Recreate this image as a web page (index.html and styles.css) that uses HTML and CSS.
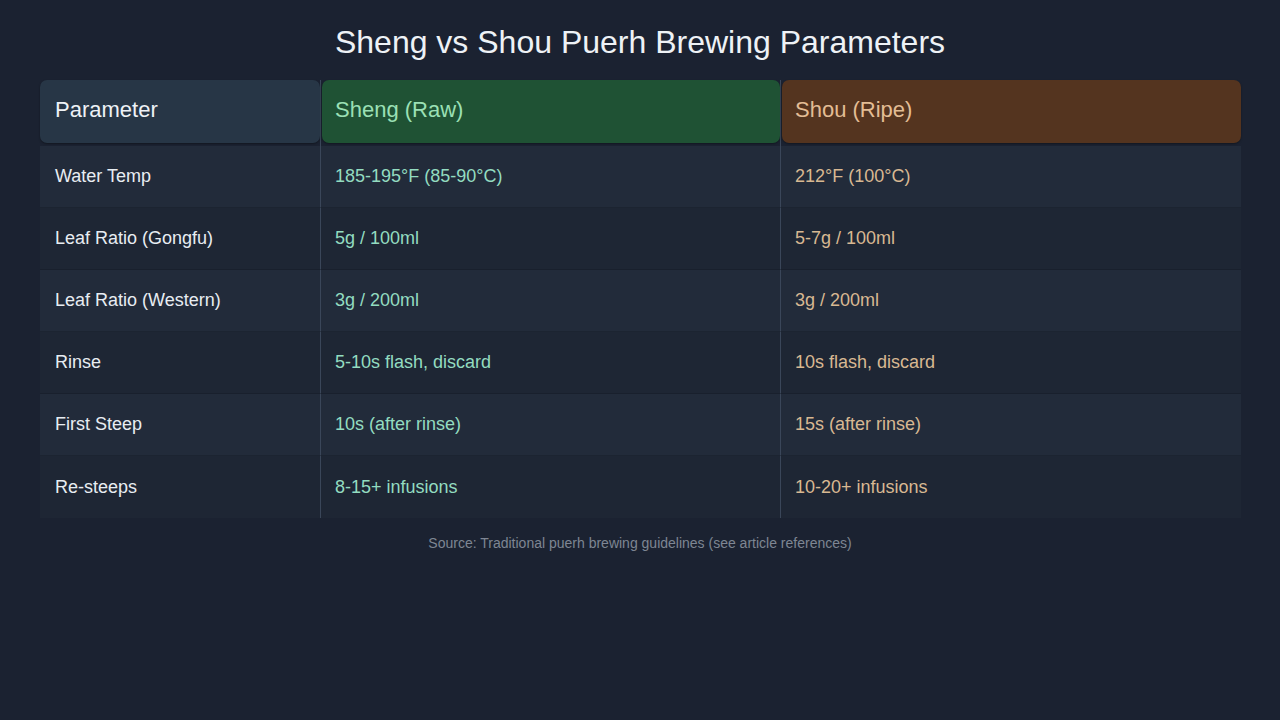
FILE: index.html
```html
<!DOCTYPE html>
<html lang="en">
<head>
<meta charset="utf-8">
<title>Sheng vs Shou Puerh Brewing Parameters</title>
<link rel="stylesheet" href="styles.css">
</head>
<body>
<main class="page">
  <h1 class="title">Sheng vs Shou Puerh Brewing Parameters</h1>
  <div class="table">
    <div class="hcell c1"><div class="hbox param">Parameter</div></div>
    <div class="hcell c2"><div class="hbox sheng">Sheng (Raw)</div></div>
    <div class="hcell c3"><div class="hbox shou">Shou (Ripe)</div></div>

    <div class="cell c1 odd label">Water Temp</div>
    <div class="cell c2 odd sheng-t">185-195°F (85-90°C)</div>
    <div class="cell c3 odd shou-t">212°F (100°C)</div>

    <div class="cell c1 even label">Leaf Ratio (Gongfu)</div>
    <div class="cell c2 even sheng-t">5g / 100ml</div>
    <div class="cell c3 even shou-t">5-7g / 100ml</div>

    <div class="cell c1 odd label">Leaf Ratio (Western)</div>
    <div class="cell c2 odd sheng-t">3g / 200ml</div>
    <div class="cell c3 odd shou-t">3g / 200ml</div>

    <div class="cell c1 even label">Rinse</div>
    <div class="cell c2 even sheng-t">5-10s flash, discard</div>
    <div class="cell c3 even shou-t">10s flash, discard</div>

    <div class="cell c1 odd label">First Steep</div>
    <div class="cell c2 odd sheng-t">10s (after rinse)</div>
    <div class="cell c3 odd shou-t">15s (after rinse)</div>

    <div class="cell c1 even label last">Re-steeps</div>
    <div class="cell c2 even sheng-t last">8-15+ infusions</div>
    <div class="cell c3 even shou-t last">10-20+ infusions</div>
  </div>
  <p class="source">Source: Traditional puerh brewing guidelines (see article references)</p>
</main>
</body>
</html>
```

FILE: styles.css
```css
* { box-sizing: border-box; }
html, body {
  margin: 0;
  padding: 0;
  background: #1b2231;
  width: 1280px;
  height: 720px;
  overflow: hidden;
  font-family: "Liberation Sans", Arial, sans-serif;
}
.page {
  padding: 24px 40px 0 40px;
  display: flex;
  flex-direction: column;
}
.title {
  margin: 0;
  height: 56px;
  font-size: 32px;
  font-weight: 400;
  color: #eef2f6;
  text-align: center;
  line-height: 36px;
}
.table {
  display: grid;
  grid-template-columns: 281px 460px 460px;
}
.hcell {
  padding-bottom: 3px;
}
.c1, .c2 { border-right: 1px solid #3a4659; }
.hcell.c2, .hcell.c3 { padding-left: 1px; }
.hbox {
  height: 63px;
  border-radius: 7px;
  display: flex;
  align-items: center;
  padding-left: 15px;
  padding-bottom: 4px;
  font-size: 22px;
  box-shadow: 0 1px 2px rgba(0,0,0,0.35);
}
.hbox.param { background: #273646; color: #eef2f6; }
.hbox.sheng { background: #1f5234; color: #9be0b5; padding-left: 13px; }
.hbox.shou { background: #54341f; color: #e3bd95; padding-left: 13px; }
.cell {
  height: 62px;
  display: flex;
  align-items: center;
  padding-left: 15px;
  font-size: 18px;
  border-bottom: 1px solid rgba(10,14,22,0.25);
}
.cell.c2, .cell.c3 { padding-left: 14px; }
.cell.last { border-bottom: none; }
.odd { background: #222b3a; }
.even { background: #1e2634; }
.label { color: #e8edf2; }
.sheng-t { color: #93dcc0; }
.shou-t { color: #d8b892; }
.source {
  margin: 17px 0 0 0;
  text-align: center;
  font-size: 14px;
  color: #7e8693;
}
```
